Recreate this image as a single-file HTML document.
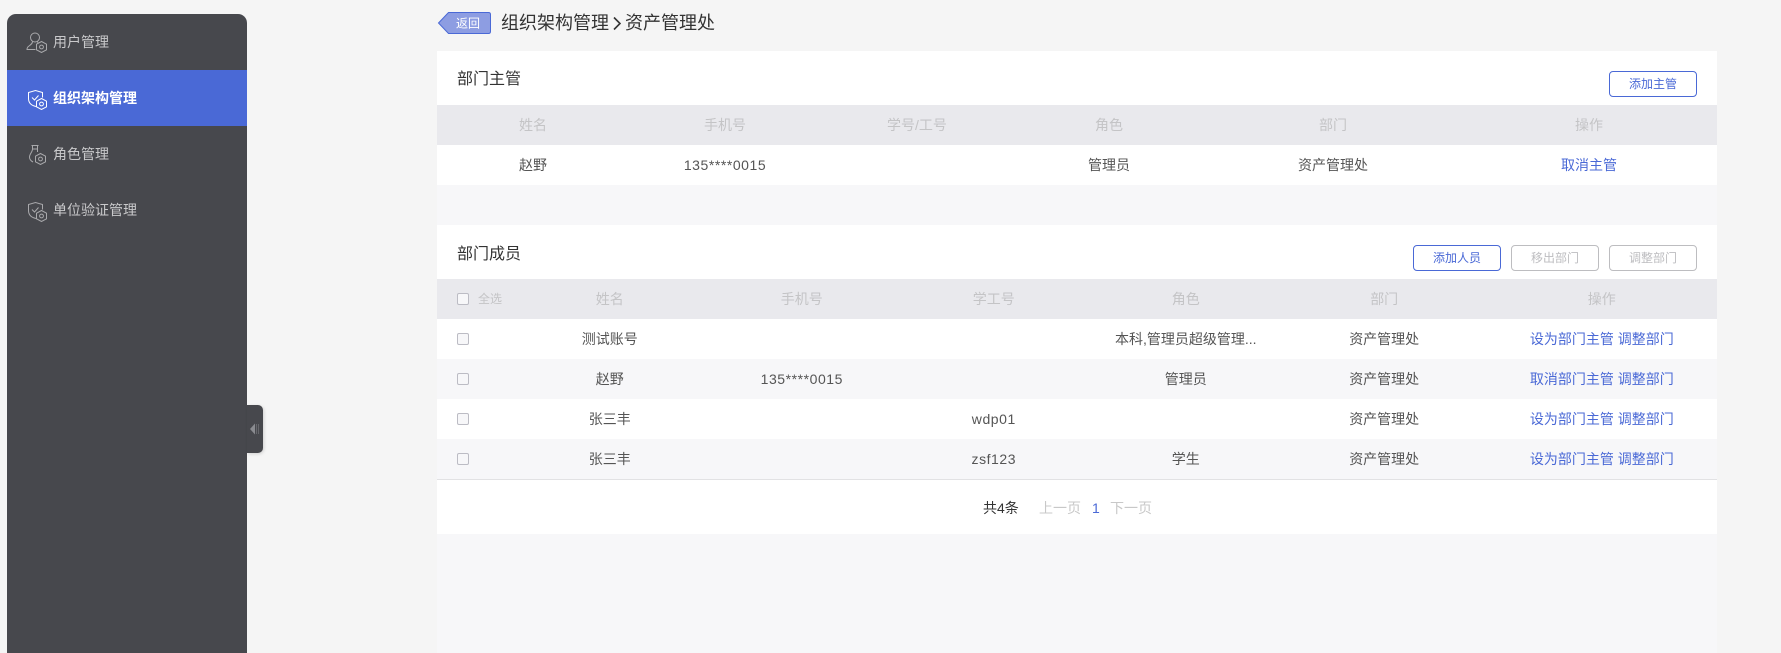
<!DOCTYPE html>
<html lang="zh"><head><meta charset="utf-8"><title>组织架构管理</title>
<style>
*{box-sizing:border-box;margin:0;padding:0}
html,body{width:1781px;height:653px;overflow:hidden;background:#f5f5f5;font-family:"Liberation Sans","Noto Sans CJK SC",sans-serif;font-size:14px;color:#555}
.abs{position:absolute}
#side{left:7px;top:14px;width:240px;height:639px;background:#47484d;border-radius:9px 9px 0 0;overflow:hidden}
.mi{position:absolute;left:0;width:240px;height:56px;line-height:56px;padding-left:46px;color:#c9c9cb;font-size:14px}
.mi.on{background:#4a69d6;color:#fff;font-weight:700}
.mi svg{position:absolute;left:19px;top:18px}
#tog{left:247px;top:405px;width:16px;height:48px;background:#47484d;border-radius:0 5px 5px 0;box-shadow:1px 1px 3px rgba(0,0,0,.15)}
#main{left:437px;top:51px;width:1280px;height:602px;background:#f7f7f9}
.w{position:absolute;left:0;width:1280px;background:#fff}
.row{position:absolute;left:0;width:1280px;height:40px;display:flex;line-height:40px;text-align:center;white-space:nowrap}
.row.h{background:#e9e9ed;color:#c4c4c6}
.row.g{background:#f7f7f9}
.row div{flex:none}
a{color:#4a69d6;text-decoration:none}
.t{position:absolute;left:20px;font-size:16px;color:#333;line-height:24px}
.b{position:absolute;width:88px;height:26px;line-height:24px;border:1px solid #4a69d6;border-radius:4px;text-align:center;font-size:12px;color:#4a69d6;background:#fff}
.b.d{border-color:#bdbdc0;color:#bdbdc0}
.cb{position:absolute;left:20px;top:14px;width:12px;height:12px;border:1px solid #bcbcc4;border-radius:2px;background:#f7f7f9}
.num{letter-spacing:.55px}
.s1 div:nth-child(-n+4){width:192px}.s1 div:nth-child(n+5){width:256px}
.s2 div:nth-child(1){width:76.8px}.s2 div:nth-child(n+2):nth-child(-n+5){width:192px}.s2 div:nth-child(6){width:204.8px}.s2 div:nth-child(7){width:230.4px}
</style></head><body>
<div id="side" class="abs">
<div class="mi" style="top:0"><svg style="top:17px" width="22" height="22" viewBox="0 0 22 22" fill="none" stroke="#a9a9ac" stroke-width="1"><circle cx="9" cy="6.500" r="4.500"/><path d="M6.500 10.500C6.500 12.500 5 13.500 3 15C1.500 16 1 17 1 18.500H9.500M11.500 10.500C11.500 11 11.700 11.300 12 11.700"/><path d="M15.500 10.500L20.500 13.200V18.800L15.500 21.500L10.500 18.800V13.200Z"/><circle cx="15.500" cy="16" r="1.900"/></svg>用户管理</div>
<div class="mi on" style="top:56px"><svg width="22" height="22" viewBox="0 0 22 22" fill="none" stroke="#fff" stroke-width="1"><path d="M10 18.500C5.500 17.500 2.500 15 2.500 10.500V4.500L9.500 2.500L16.500 4.500V9.500"/><path d="M6 9.500L8.500 12L12.500 7.500"/><path d="M15.500 10.500L20.500 13.200V18.800L15.500 21.500L10.500 18.800V13.200Z"/><circle cx="15.500" cy="16" r="1.900"/></svg>组织架构管理</div>
<div class="mi" style="top:112px"><svg style="top:17px" width="22" height="22" viewBox="0 0 22 22" fill="none" stroke="#a9a9ac" stroke-width="1"><path d="M5.500 2.500H12.500M6.500 2.500V6H11.500V2.500M6.500 6C6.500 9 3.500 11 3.500 14C3.500 16 5 18 7 19M11.500 6V9"/><path d="M14.500 10.500L19.500 13.200V18.800L14.500 21.500L9.500 18.800V13.200Z"/><circle cx="14.500" cy="16" r="1.900"/></svg>角色管理</div>
<div class="mi" style="top:168px"><svg width="22" height="22" viewBox="0 0 22 22" fill="none" stroke="#a9a9ac" stroke-width="1"><path d="M10 18.500C5.500 17.500 2.500 15 2.500 10.500V4.500L9.500 2.500L16.500 4.500V9.500"/><path d="M6 9.500L8.500 12L12.500 7.500"/><path d="M15.500 10.500L20.500 13.200V18.800L15.500 21.500L10.500 18.800V13.200Z"/><circle cx="15.500" cy="16" r="1.900"/></svg>单位验证管理</div>
</div>
<div id="tog" class="abs"><svg class="abs" style="left:3px;top:18px" width="10" height="12" viewBox="0 0 10 12"><path d="M0 6L5 .5V11.500Z" fill="#8a8b90"/><path d="M6.500 1V11M8.500 1V11" stroke="#66676c" stroke-width="1"/></svg></div>

<svg class="abs" style="left:437px;top:11px" width="56" height="24" viewBox="0 0 56 24"><path d="M1.500 12L11.500 1.500H51.500Q53.500 1.500 53.500 3.500V20.500Q53.500 22.500 51.500 22.500H11.500Z" fill="#8d9de2" stroke="#4a69d6" stroke-width="1"/><text x="19" y="16.500" font-size="12" fill="#fff" font-family="Liberation Sans,Noto Sans CJK SC,sans-serif">返回</text></svg>
<div class="abs" style="left:501px;top:10px;font-size:18px;line-height:27px;color:#333;white-space:nowrap">组织架构管理<svg style="display:inline-block;vertical-align:-2px;margin:0 4px 0 4px" width="8" height="15" viewBox="0 0 8 15" fill="none" stroke="#333" stroke-width="1.600"><path d="M1 1.500L7 7.500L1 13.500"/></svg>资产管理处</div>

<div id="main" class="abs">
<div class="w" style="top:0;height:134px"></div>
<div class="t" style="top:17px">部门主管</div>
<div class="b" style="left:1172px;top:20px">添加主管</div>
<div class="row h s1" style="top:54px"><div>姓名</div><div>手机号</div><div>学号/工号</div><div>角色</div><div>部门</div><div>操作</div></div>
<div class="row s1" style="top:94px;background:#fff"><div>赵野</div><div class="num">135****0015</div><div></div><div>管理员</div><div>资产管理处</div><div><a>取消主管</a></div></div>

<div class="w" style="top:174px;height:309px"></div>
<div class="t" style="top:192px">部门成员</div>
<div class="b" style="left:976px;top:194px">添加人员</div>
<div class="b d" style="left:1074px;top:194px">移出部门</div>
<div class="b d" style="left:1172px;top:194px">调整部门</div>
<div class="row h s2" style="top:228px"><div></div><div>姓名</div><div>手机号</div><div>学工号</div><div>角色</div><div>部门</div><div>操作</div><span class="cb"></span><span class="abs" style="left:41px;top:0;font-size:12px">全选</span></div>
<div class="row s2" style="top:268px"><div></div><div>测试账号</div><div></div><div></div><div style="font-size:14px">本科,管理员超级管理...</div><div>资产管理处</div><div><a>设为部门主管</a>&nbsp;<a>调整部门</a></div><span class="cb"></span></div>
<div class="row g s2" style="top:308px"><div></div><div>赵野</div><div class="num">135****0015</div><div></div><div>管理员</div><div>资产管理处</div><div><a>取消部门主管</a>&nbsp;<a>调整部门</a></div><span class="cb"></span></div>
<div class="row s2" style="top:348px"><div></div><div>张三丰</div><div></div><div class="num">wdp01</div><div></div><div>资产管理处</div><div><a>设为部门主管</a>&nbsp;<a>调整部门</a></div><span class="cb"></span></div>
<div class="row g s2" style="top:388px"><div></div><div>张三丰</div><div></div><div class="num">zsf123</div><div>学生</div><div>资产管理处</div><div><a>设为部门主管</a>&nbsp;<a>调整部门</a></div><span class="cb"></span></div>
<div class="abs" style="left:0;top:428px;width:1280px;height:1px;background:#e2e2e4"></div>
<div class="abs" style="left:546px;top:447px;color:#333;line-height:20px;white-space:nowrap">共4条</div>
<div class="abs" style="left:602px;top:447px;color:#c8c8c8;line-height:20px;white-space:nowrap">上一页</div>
<div class="abs" style="left:655px;top:447px;color:#4a69d6;line-height:20px">1</div>
<div class="abs" style="left:673px;top:447px;color:#c8c8c8;line-height:20px;white-space:nowrap">下一页</div>
</div>
</body></html>
